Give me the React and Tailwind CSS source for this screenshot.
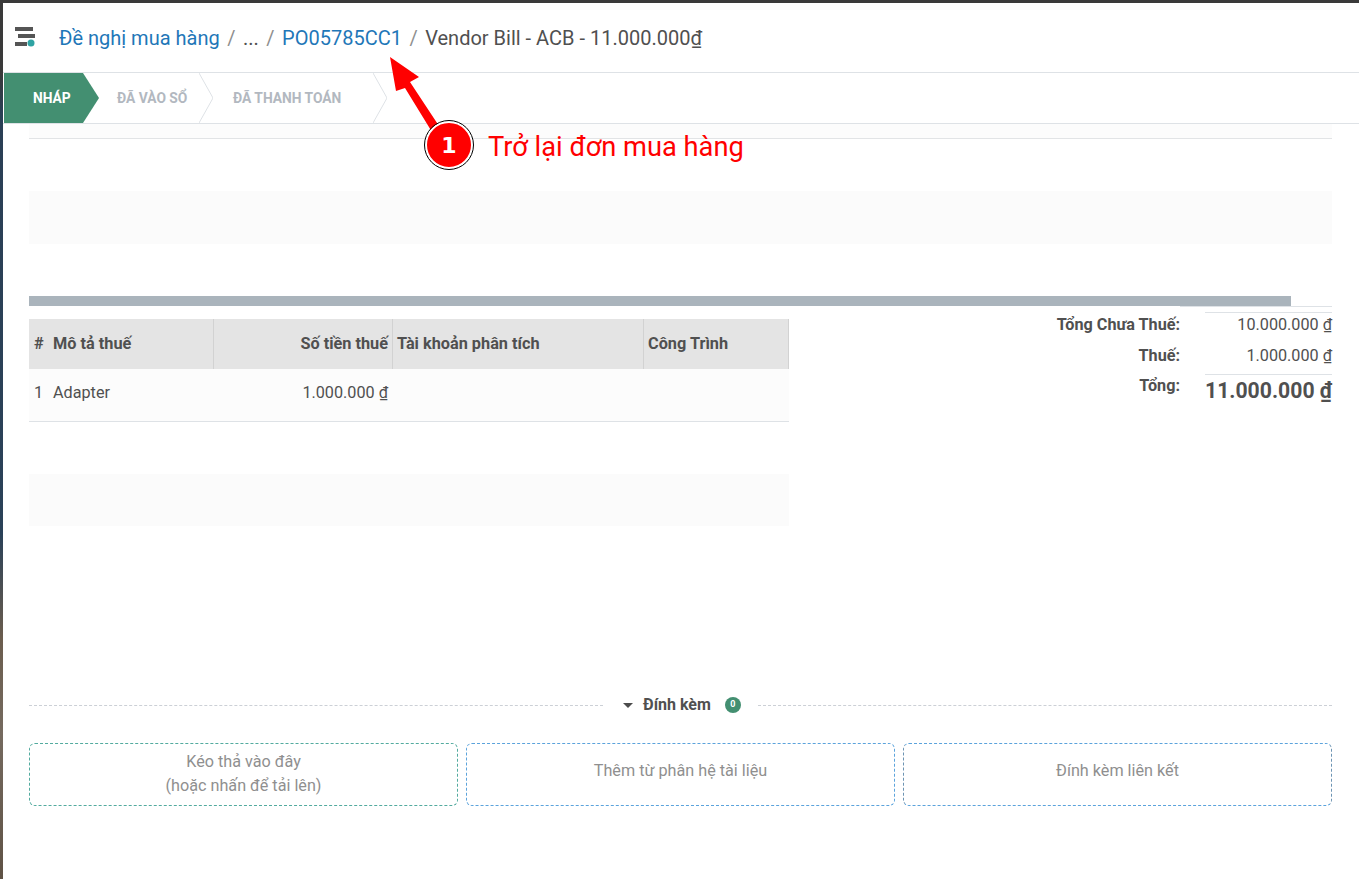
import React from 'react';

const Dong = () => <span className="underline">₫</span>;

// Odoo-style arrow step, drawn because of the chevron tip
const StepChevron = () => (
  <svg width="14" height="50" viewBox="0 0 14 50" className="shrink-0">
    <path d="M0 0 L14 25 L0 50" fill="none" stroke="#dee2e6" strokeWidth="1" />
  </svg>
);

const UploadBox = ({ color, children, pad }) => (
  <div className={`flex-1 h-[63px] rounded-md border border-dashed ${color} ${pad} flex flex-col items-center justify-center text-[16.2px] leading-[24px] text-[#8f8f8f]`}>
    {children}
  </div>
);

export default function App() {
  return (
    <div className="w-[1359px] h-[879px] overflow-hidden relative flex flex-col bg-white text-[#505050]" style={{ fontFamily: 'Roboto, sans-serif' }}>
      <div className="h-[3px] shrink-0 bg-[#3a3a3a]" />
      <div className="flex flex-1 min-h-0">
        <div className="w-[3px] shrink-0 bg-[linear-gradient(to_bottom,#3a3a3a_0,#3a3a3a_70px,#2a3f55_110px,#2a4158_530px,#6b5d4e_635px,#756a5f_730px,#5f5245_876px)]" />
        <div className="flex-1 min-w-0 flex flex-col">
          {/* Breadcrumb */}
          <div className="h-[70px] shrink-0 border-b border-[#dee2e6] flex items-center pl-[12px] pb-[2px]">
            <svg width="21" height="20" viewBox="0 0 21 20" className="shrink-0">
              <rect x="0" y="0" width="18" height="4" fill="#555555" />
              <rect x="3" y="7" width="17" height="4" fill="#555555" />
              <rect x="0" y="15" width="12" height="4" fill="#555555" />
              <circle cx="16" cy="16" r="3.5" fill="#2fa3a3" />
            </svg>
            <div className="ml-[23px] mt-[3px] flex items-center text-[20px] whitespace-nowrap">
              <span className="text-[#1f77b8]">Đề nghị mua hàng</span>
              <span className="mx-[7.5px] text-[#8f8f8f]">/</span>
              <span>...</span>
              <span className="mx-[7.5px] text-[#8f8f8f]">/</span>
              <span className="text-[#1f77b8]">PO05785CC1</span>
              <span className="mx-[7.5px] text-[#8f8f8f]">/</span>
              <span>Vendor Bill - ACB - 11.000.000<Dong /></span>
            </div>
          </div>

          {/* Status bar */}
          <div className="h-[51px] shrink-0 border-b border-[#dee2e6] flex items-stretch pl-[1px] text-[13.8px] font-bold whitespace-nowrap">
            <div className="w-[95px] h-[50px] flex items-center pl-[29px] text-white bg-[#438f71] [clip-path:polygon(0_0,79px_0,95px_25px,79px_50px,0_50px)]">
              NHÁP
            </div>
            <div className="w-[100px] h-[50px] flex items-center pl-[18px] text-[#b2b8c0]">ĐÃ VÀO SỔ</div>
            <StepChevron />
            <div className="w-[160px] h-[50px] flex items-center pl-[20px] text-[#b2b8c0]">ĐÃ THANH TOÁN</div>
            <StepChevron />
          </div>

          {/* Sheet */}
          <div className="flex-1 min-h-0 pl-[26px] pr-[27px] flex flex-col">
            <div className="h-[15px] shrink-0 bg-[#fcfcfc] border-b border-[#e2e4e6]" />
            <div className="h-[53px] shrink-0 mt-[52px] bg-[#fbfbfb]" />
            <div className="h-[10px] shrink-0 mt-[52px] mr-[41px] bg-[#aab4bc]" />
            <div className="flex">
              {/* Tax table */}
              <div className="w-[760px] shrink-0 mt-[13px]">
                <div className="h-[50px] bg-[#e4e4e4] flex items-center text-[16.3px] font-bold whitespace-nowrap">
                  <div className="w-[185px] h-full flex items-center border-r border-[#d2d2d2] pl-[5px]">
                    <span className="w-[19px]">#</span>
                    <span>Mô tả thuế</span>
                  </div>
                  <div className="w-[179px] h-full flex items-center justify-end border-r border-[#d2d2d2] pr-[4px]">Số tiền thuế</div>
                  <div className="w-[251px] h-full flex items-center border-r border-[#d2d2d2] pl-[4px]">Tài khoản phân tích</div>
                  <div className="w-[145px] h-full flex items-center border-r border-[#d2d2d2] pl-[4px]">Công Trình</div>
                </div>
                <div className="h-[53px] bg-[#fcfcfc] border-b border-[#dee2e6] flex items-center pb-[4px] text-[16.2px] whitespace-nowrap">
                  <div className="w-[185px] flex pl-[5px]">
                    <span className="w-[19px]">1</span>
                    <span>Adapter</span>
                  </div>
                  <div className="w-[179px] text-right pr-[5px]">1.000.000 <Dong /></div>
                </div>
                <div className="h-[52px] mt-[52px] bg-[#fbfbfb]" />
              </div>

              {/* Totals */}
              <div className="flex-1 text-[16.2px] whitespace-nowrap">
                <div className="ml-[391px] border-t border-[#dee2e6] h-0" />
                <div className="flex h-[35px] pt-[5px]">
                  <div className="w-[391px] mt-[2px] text-right font-bold leading-[21px]">Tổng Chưa Thuế:</div>
                  <div className="flex-1 ml-[25px] border-t border-[#dee2e6] text-right leading-[21px] pt-[1px]">10.000.000 <Dong /></div>
                </div>
                <div className="flex h-[32px] pt-[3px]">
                  <div className="w-[391px] text-right font-bold leading-[21px]">Thuế:</div>
                  <div className="flex-1 ml-[25px] text-right leading-[21px]">1.000.000 <Dong /></div>
                </div>
                <div className="flex">
                  <div className="w-[391px] pt-[1px] text-right font-bold leading-[21px]">Tổng:</div>
                  <div className="flex-1 ml-[25px] border-t border-[#dee2e6] pt-[1px] text-right text-[21.2px] font-bold leading-[30px]">11.000.000 <Dong /></div>
                </div>
              </div>
            </div>

            {/* Attachments */}
            <div className="mt-[169px] h-[20px] flex items-center">
              <div className="flex-1 border-t border-dashed border-[#ccd0d6]" />
              <div className="w-[155px] shrink-0 flex items-center whitespace-nowrap text-[16px] font-bold pl-[20px]">
                <span className="w-0 h-0 border-x-[5px] border-x-transparent border-t-[5px] border-t-[#4c4c4c]" />
                <span className="ml-[10px]">Đính kèm</span>
                <span className="ml-[14px] w-[16px] h-[16px] rounded-full bg-[#438f71] text-white text-[9px] flex items-center justify-center">0</span>
              </div>
              <div className="flex-1 border-t border-dashed border-[#ccd0d6]" />
            </div>
            <div className="mt-[28px] flex gap-[8px]">
              <UploadBox color="border-[#53ab9f]" pad="pb-[2px]">
                <span>Kéo thả vào đây</span>
                <span>(hoặc nhấn để tải lên)</span>
              </UploadBox>
              <UploadBox color="border-[#5ba3dc]" pad="pb-[7px]">Thêm từ phân hệ tài liệu</UploadBox>
              <UploadBox color="border-y-[#5ba3dc] border-x-[#6d94b3]" pad="pb-[7px]">Đính kèm liên kết</UploadBox>
            </div>
          </div>
        </div>
      </div>

      {/* Annotation laid over the page */}
      <svg className="absolute left-[385px] top-[50px]" width="70" height="90" viewBox="0 0 70 90">
        <path d="M5 7 L34 27 L25 32 L54 76 L47 82 L20 38 L11 41 Z" fill="#ff0000" />
      </svg>
      <div className="absolute left-[425px] top-[121px] w-[48px] h-[48px] rounded-full bg-[#ff0000] border-[2px] border-white outline outline-[1px] outline-black flex items-center justify-center text-white text-[22px] font-bold" style={{ fontFamily: '"DejaVu Sans", sans-serif' }}>
        1
      </div>
      <div className="absolute left-[488px] top-[129px] text-[27.25px] leading-[36px] text-[#ff0000] whitespace-nowrap">Trở lại đơn mua hàng</div>
    </div>
  );
}
